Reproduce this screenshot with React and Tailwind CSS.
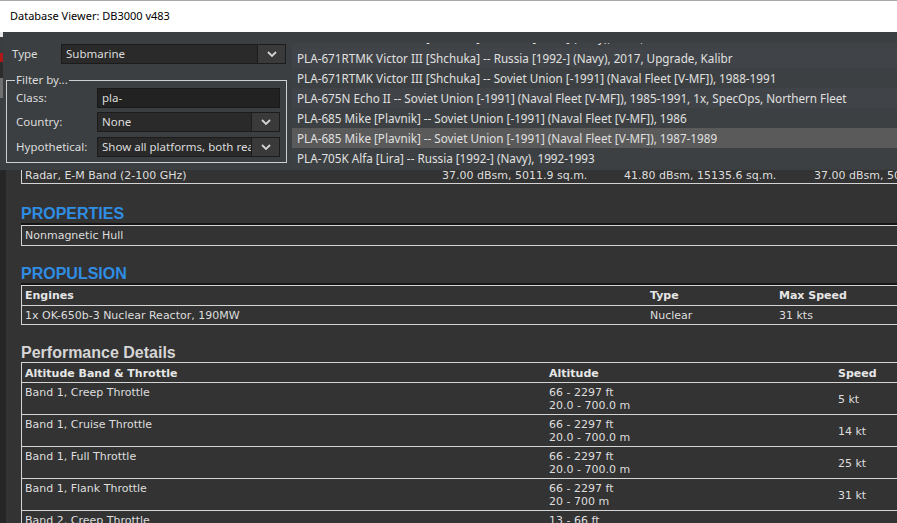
import React from 'react';

const listRows = [
  'PLA-671RTMK Victor III [Shchuka] -- Russia [1992-] (Navy), 2017, Upgrade, Kalibr',
  'PLA-671RTMK Victor III [Shchuka] -- Soviet Union [-1991] (Naval Fleet [V-MF]), 1988-1991',
  'PLA-675N Echo II -- Soviet Union [-1991] (Naval Fleet [V-MF]), 1985-1991, 1x, SpecOps, Northern Fleet',
  'PLA-685 Mike [Plavnik] -- Soviet Union [-1991] (Naval Fleet [V-MF]), 1986',
  'PLA-685 Mike [Plavnik] -- Soviet Union [-1991] (Naval Fleet [V-MF]), 1987-1989',
  'PLA-705K Alfa [Lira] -- Russia [1992-] (Navy), 1992-1993',
];

const perfRows = [
  ['Band 1, Creep Throttle', '66 - 2297 ft', '20.0 - 700.0 m', '5 kt'],
  ['Band 1, Cruise Throttle', '66 - 2297 ft', '20.0 - 700.0 m', '14 kt'],
  ['Band 1, Full Throttle', '66 - 2297 ft', '20.0 - 700.0 m', '25 kt'],
  ['Band 1, Flank Throttle', '66 - 2297 ft', '20 - 700 m', '31 kt'],
  ['Band 2, Creep Throttle', '13 - 66 ft', '4.0 - 20.0 m', '2 kt'],
];

const Chevron = () => (
  <svg width="10" height="6" viewBox="0 0 10 6" fill="none">
    <polyline points="1,1 5,5 9,1" stroke="#d4d4d4" strokeWidth="1.8" />
  </svg>
);

const Combo = ({ text, className }) => (
  <div className={`flex h-[20px] bg-[#2a2a2a] border border-[#1c1c1c] ${className}`}>
    <div className="flex-1 overflow-hidden whitespace-nowrap pl-[4px] leading-[18px] text-[#dcdcdc]">{text}</div>
    <div className="w-[28px] flex items-center justify-center bg-[#3a3a3a] border-l border-[#1c1c1c]">
      <Chevron />
    </div>
  </div>
);

const Heading = ({ children, blue }) => (
  <div
    className={`h-[18px] leading-[18px] text-[16px] font-bold font-['Liberation_Sans',Arial,sans-serif] ${
      blue ? 'text-[#2f8de4]' : 'text-[#d6d6d6]'
    }`}
  >
    {children}
  </div>
);

const TableTop = () => <div className="h-[2px] bg-[#161616] w-[1000px]" />;

export default function App() {
  return (
    <div className="w-[897px] h-[523px] overflow-hidden bg-[#333333] flex flex-col font-['Noto_Sans','Open_Sans',sans-serif] text-[11.5px]">
      {/* title bar */}
      <div className="h-[32px] shrink-0 bg-white border-t border-[#a8a8a8] flex items-center pl-[10px] text-[11px] text-black">
        Database Viewer: DB3000 v483
      </div>

      {/* filter panel + results list */}
      <div className="h-[138px] shrink-0 flex">
        <div className="w-[3px] flex flex-col">
          <div className="h-[5px] bg-[#e8e8e8]" />
          <div className="h-[16px] bg-[#3a3e41]" />
          <div className="h-[9px] bg-[#b01818]" />
          <div className="h-[16px] bg-[#2c2c2c]" />
          <div className="h-[20px] bg-[#707070]" />
          <div className="flex-1 bg-[#3a3e41]" />
        </div>
        <div className="flex-1 flex bg-[#3b3f42]">
          {/* left filters */}
          <div className="w-[289px] shrink-0 flex flex-col">
            <div className="mt-[12px] flex items-center">
              <div className="w-[58px] pl-[9px] text-[#dcdcdc]">Type</div>
              <Combo text="Submarine" className="w-[225px]" />
            </div>
            <div className="mt-[16px] ml-[3px] w-[281px] h-[83px] border border-[#cfcfcf] relative flex flex-col gap-[4px] pt-[7px] pl-[9px]">
              <div className="absolute -top-[9px] left-[8px] px-[1px] bg-[#3b3f42] text-[#dcdcdc] leading-[16px]">
                Filter by...
              </div>
              <div className="flex items-center">
                <div className="w-[81px] text-[#dcdcdc]">Class:</div>
                <div className="w-[183px] h-[20px] bg-[#222222] border border-[#191919] pl-[4px] leading-[18px] text-[#dcdcdc]">
                  pla-
                </div>
              </div>
              <div className="flex items-center">
                <div className="w-[81px] text-[#dcdcdc]">Country:</div>
                <Combo text="None" className="w-[183px]" />
              </div>
              <div className="flex items-center mt-[1px]">
                <div className="w-[81px] text-[#dcdcdc]">Hypothetical:</div>
                <Combo text="Show all platforms, both real and hypothetical" className="w-[183px]" />
              </div>
            </div>
          </div>

          {/* results list */}
          <div className="flex-1 mt-[11px] h-[126px] overflow-hidden flex flex-col text-[11.7px] text-[#e0e0e0] whitespace-nowrap">
            <div className="h-[5px] shrink-0 overflow-hidden bg-[#3e4245]">
              <div className="-mt-[16px] h-[20px] leading-[20px] pl-[5px]">
                PLA-671RTMK Victor III [Shchuka] -- Russia [1992-] (Navy), 1992, Kalibr
              </div>
            </div>
            {listRows.map((row, i) => (
              <div
                key={i}
                className={`h-[20px] shrink-0 leading-[20px] pl-[5px] ${
                  i === 4 ? 'bg-[#5a5a5a]' : i % 2 === 0 ? 'bg-[#404448]' : 'bg-[#3c4043]'
                }`}
              >
                {row}
              </div>
            ))}
          </div>
        </div>
      </div>

      {/* report */}
      <div className="flex-1 overflow-hidden border-l-[6px] border-[#262626] pl-[15px] font-['DejaVu_Sans',Verdana,sans-serif] text-[11px] text-[#dedede]">
        <div className="w-[1000px] h-[14px] flex border-l border-b border-[#d4d4d4] leading-[12px]">
          <div className="w-[417px] pl-[3px]">Radar, E-M Band (2-100 GHz)</div>
          <div className="w-[182px] pl-[3px]">37.00 dBsm, 5011.9 sq.m.</div>
          <div className="w-[190px] pl-[3px]">41.80 dBsm, 15135.6 sq.m.</div>
          <div className="flex-1 pl-[3px]">37.00 dBsm, 5011.9 sq.m.</div>
        </div>

        <div className="mt-[21px]">
          <Heading blue>PROPERTIES</Heading>
        </div>
        <TableTop />
        <div className="w-[1000px] border-l border-t border-b border-[#d4d4d4] pt-[3px] pb-[3px] pl-[3px] leading-[13px]">
          Nonmagnetic Hull
        </div>

        <div className="mt-[19px]">
          <Heading blue>PROPULSION</Heading>
        </div>
        <TableTop />
        <div className="w-[1000px] border-l border-t border-[#d4d4d4] leading-[13px]">
          <div className="flex border-b border-[#d4d4d4] pt-[3px] pb-[3px] font-bold text-[#e6e6e6]">
            <div className="w-[625px] pl-[3px]">Engines</div>
            <div className="w-[129px] pl-[3px]">Type</div>
            <div className="flex-1 pl-[3px]">Max Speed</div>
          </div>
          <div className="flex border-b border-[#d4d4d4] pt-[3px] pb-[2px]">
            <div className="w-[625px] pl-[3px]">1x OK-650b-3 Nuclear Reactor, 190MW</div>
            <div className="w-[129px] pl-[3px]">Nuclear</div>
            <div className="flex-1 pl-[3px]">31 kts</div>
          </div>
        </div>

        <div className="mt-[19px]">
          <Heading>Performance Details</Heading>
        </div>
        <div className="w-[1000px] border-l border-t border-[#d4d4d4] leading-[13px]">
          <div className="flex border-b border-[#d4d4d4] pt-[4px] pb-[2px] font-bold text-[#e6e6e6]">
            <div className="w-[524px] pl-[3px]">Altitude Band &amp; Throttle</div>
            <div className="w-[289px] pl-[3px]">Altitude</div>
            <div className="flex-1 pl-[3px]">Speed</div>
          </div>
          {perfRows.map((r, i) => (
            <div key={i} className="flex border-b border-[#d4d4d4] pt-[3px] pb-[2px]">
              <div className="w-[524px] pl-[3px]">{r[0]}</div>
              <div className="w-[289px] pl-[3px] flex flex-col">
                <span>{r[1]}</span>
                <span>{r[2]}</span>
              </div>
              <div className="flex-1 pl-[3px] self-center">{r[3]}</div>
            </div>
          ))}
        </div>
      </div>
    </div>
  );
}
